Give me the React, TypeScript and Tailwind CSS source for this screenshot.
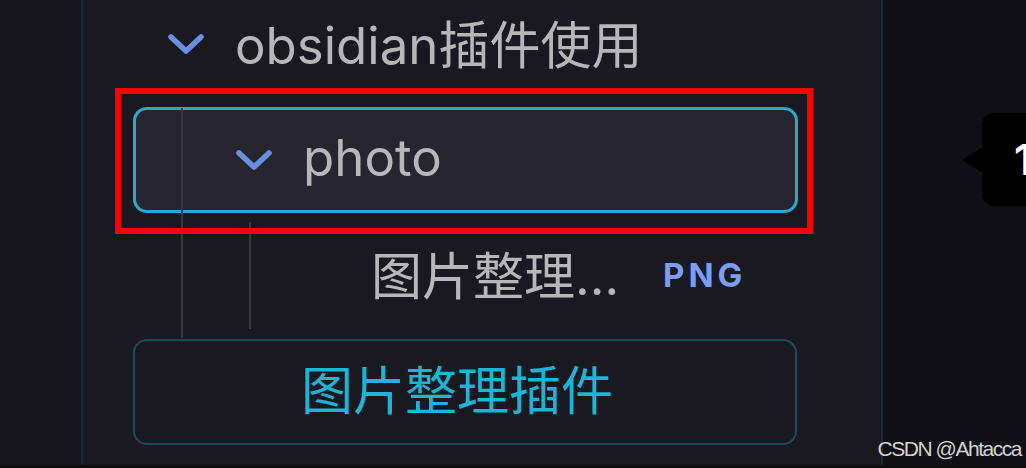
import React from "react";

const Chevron = ({ className = "" }: { className?: string }) => (
  <svg width="38" height="24" viewBox="0 0 38 24" className={className}>
    <polyline
      points="4,5 19,19 34,5"
      fill="none"
      stroke="#6b8fe0"
      strokeWidth="5.5"
      strokeLinecap="round"
      strokeLinejoin="round"
    />
  </svg>
);

const font = "font-['Inter','Noto_Sans_CJK_SC',sans-serif]";

export default function App() {
  return (
    <div className={`w-[1026px] h-[468px] flex flex-col bg-[#0e0d12] overflow-hidden ${font}`}>
      <div className="flex h-[465px]">
        {/* left column */}
        <div className="w-[83px] bg-[#17161e] border-r-2 border-[#1d2634]" />
        {/* main panel */}
        <div className="relative w-[800px] bg-[#1a1921] border-r-2 border-[#1d2634] flex flex-col">
          {/* row 1 */}
          <div className="h-[90px] flex items-center pl-[84px]">
            <Chevron className="shrink-0 mt-[-2px]" />
            <span className="ml-[30px] text-[51px] leading-none text-[#b7b7b9]">obsidian插件使用</span>
          </div>
          {/* photo folder (selected) */}
          <div className="mt-[17px] ml-[50px] w-[665px] h-[106px] rounded-[14px] border-[3px] border-[#2aaaca] bg-[#262530] flex items-center pl-[99px]">
            <Chevron className="shrink-0" />
            <span className="ml-[30px] text-[51px] leading-none text-[#b7b7b9] mt-[-6px]">photo</span>
          </div>
          {/* file row */}
          <div className="h-[126px] flex items-center pl-[288px]">
            <span className="text-[51px] leading-none text-[#b7b7b9]">图片整理...</span>
            <span className="ml-[44px] text-[33px] font-bold tracking-[0.12em] text-[#7b9ef0]">PNG</span>
          </div>
          {/* bottom box */}
          <div className="ml-[50px] w-[664px] h-[106px] rounded-[14px] border-2 border-[#1f4959] flex items-center justify-center pr-[16px]">
            <span className="text-[52px] leading-none text-[#1bb6d7]">图片整理插件</span>
          </div>

          {/* tree guide lines */}
          <div className="absolute left-[98px] top-[108px] w-[2px] h-[230px] bg-[#393842]" />
          <div className="absolute left-[166px] top-[222px] w-[2px] h-[107px] bg-[#393842]" />
          {/* red annotation */}
          <div className="absolute left-[32px] top-[88px] w-[698px] h-[146px] border-[6px] border-[#fe0000]" />
        </div>
        {/* right area */}
        <div className="relative flex-1 bg-[#111017]">
          <div className="absolute left-[99px] top-[113px] w-[80px] h-[93px] rounded-[12px] bg-black flex items-center pl-[32px]">
            <span className="text-[42px] font-semibold leading-none text-white">1</span>
          </div>
          <div className="absolute left-[79px] top-[147px] w-0 h-0 border-y-[13px] border-y-transparent border-r-[21px] border-r-black" />
          <div className="absolute right-[5px] bottom-[6px] text-[21px] leading-none tracking-[-0.07em] text-[#d4d4d6] font-['Liberation_Sans',sans-serif] whitespace-nowrap">
            CSDN @Ahtacca
          </div>
        </div>
      </div>
    </div>
  );
}
